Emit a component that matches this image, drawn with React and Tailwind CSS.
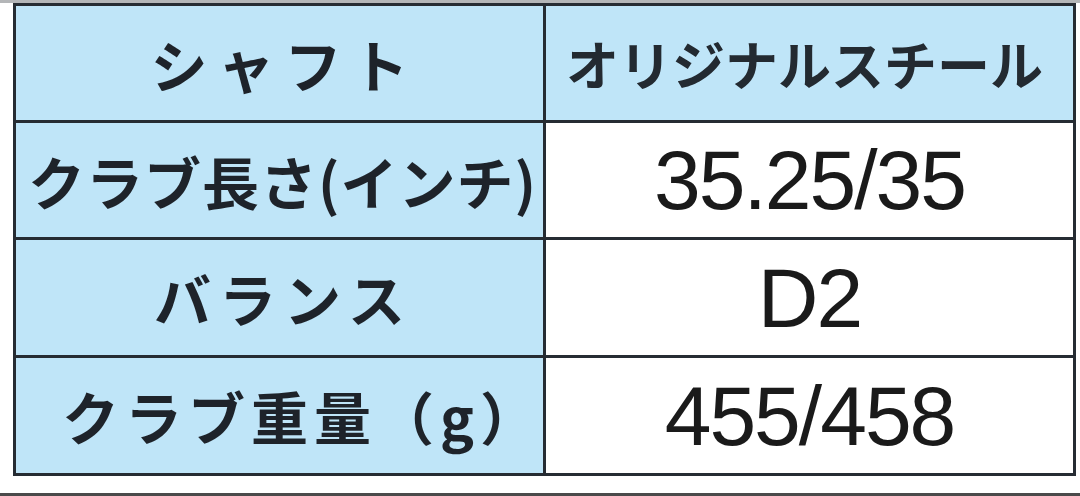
import React from "react";

const rows = [
  { label: "シャフト", labelCls: "tracking-[10px] pl-[10px]", value: "オリジナルスチール", jp: true, h: "h-[117px]" },
  { label: "クラブ長さ(インチ)", labelCls: "tracking-[1px] pl-[6px]", value: "35.25/35", white: true, h: "h-[117px]" },
  { label: "バランス", labelCls: "tracking-[8px] pl-[8px]", value: "D2", white: true, h: "h-[118px]" },
  { label: "クラブ重量（g）", labelCls: "tracking-[6px] pl-[46px]", value: "455/458", white: true, h: "h-[115px]" },
];

const App = () => {
  return (
    <div className="w-[1080px] h-[496px] bg-white overflow-hidden flex flex-col">
      <div className="h-[3px] bg-[#b4b6b8]" />
      <div className="ml-[13px] w-[1063px] border-[3px] border-[#262c33] flex flex-col">
        {rows.map((r, i) => (
          <div
            key={i}
            className={`flex ${r.h} ${i < rows.length - 1 ? "border-b-[3px] border-[#262c33]" : ""}`}
          >
            {/* left label */}
            <div className="w-[530px] shrink-0 bg-[#bfe5f8] border-r-[3px] border-[#262c33] flex items-center justify-center">
              <span
                className={`font-['Noto_Sans_CJK_JP',sans-serif] font-bold text-[57px] leading-none text-[#1e232a] whitespace-nowrap ${r.labelCls}`}
              >
                {r.label}
              </span>
            </div>
            {/* right value */}
            <div
              className={`flex-1 flex items-center justify-center ${r.white ? "bg-white" : "bg-[#bfe5f8]"}`}
            >
              {r.jp ? (
                <span className="font-['Noto_Sans_CJK_JP',sans-serif] font-semibold text-[53px] leading-none text-[#232a31] whitespace-nowrap pr-[10px]">
                  {r.value}
                </span>
              ) : (
                <span className="font-['Liberation_Sans',Arial,sans-serif] text-[84px] leading-none tracking-[-2px] text-[#1a1a1a] whitespace-nowrap">
                  {r.value}
                </span>
              )}
            </div>
          </div>
        ))}
      </div>
      <div className="flex-1" />
      <div className="h-[3px] bg-[#4a4a4a]" />
    </div>
  );
};

export default App;
